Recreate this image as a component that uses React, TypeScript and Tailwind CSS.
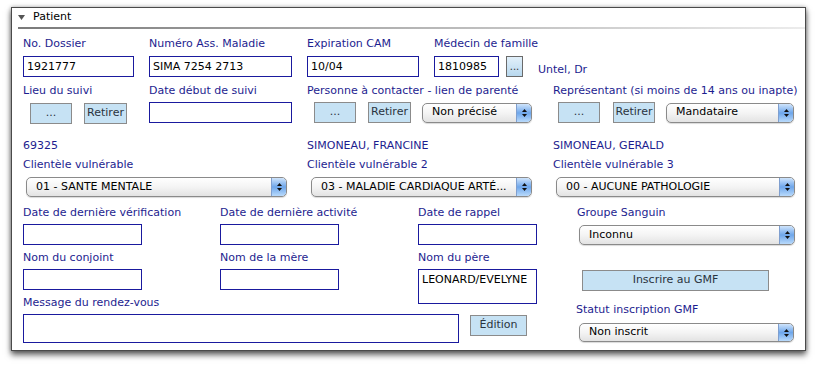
import React from 'react'

const label = 'h-[14px] leading-[14px] text-[11px] text-[#1d1d8f] whitespace-nowrap'

function Label({children, className = ''}: {children: React.ReactNode, className?: string}) {
    return <div className={`${label} ${className}`}>{children}</div>
}

function Field({className = '', value = ''}: {className?: string, value?: string}) {
    return (
        <input type="text" readOnly value={value}
               className={`block border border-[#1a1a9e] bg-white px-[3px] text-[11px] text-black outline-none ${className}`}/>
    )
}

function Btn({children, className = ''}: {children: React.ReactNode, className?: string}) {
    return (
        <div className={`flex items-center justify-center border border-[#8b8b8b] bg-[#c6e2f4] text-[11px] text-[#2a3440] ${className}`}>
            {children}
        </div>
    )
}

function Stepper() {
    return (
        <div className="flex h-full w-[15px] flex-col items-center justify-center gap-[2px] rounded-r-[4px] border-l border-[#7f9fcf] bg-gradient-to-b from-[#cfe4fb] via-[#6ea6ea] to-[#b9dafb]">
            <svg width="5" height="3" viewBox="0 0 5 3"><path d="M2.5 0 L5 3 L0 3 Z" fill="#111"/></svg>
            <svg width="5" height="3" viewBox="0 0 5 3"><path d="M0 0 L5 0 L2.5 3 Z" fill="#111"/></svg>
        </div>
    )
}

function Select({text, className = ''}: {text: string, className?: string}) {
    return (
        <div className={`flex items-center overflow-hidden rounded-[5px] border border-[#8a8a8a] bg-gradient-to-b from-white via-[#f4f4f4] to-[#e3e3e3] text-[11px] text-black shadow-[0_1px_1px_rgba(0,0,0,0.15)] ${className}`}>
            <div className="flex-1 whitespace-nowrap pl-[9px]">{text}</div>
            <Stepper/>
        </div>
    )
}

export default function App() {
    return (
        <div className="min-h-[366px] bg-white pt-[7px] pl-[11px] font-['DejaVu_Sans',sans-serif]">
            <div className="h-[344px] w-[795px] border border-[#4a4a4a] bg-white shadow-[0_4px_6px_rgba(0,0,0,0.6),0_0_4px_rgba(0,0,0,0.3)]">
                {/* header */}
                <div className="flex h-[19px] items-center pl-[6px] text-[11px] text-black">
                    <svg width="7" height="5" viewBox="0 0 7 5" className="mr-[8px]">
                        <path d="M0 0 L7 0 L3.5 5 Z" fill="#555"/>
                    </svg>
                    Patient
                </div>
                <div className="ml-[6px] h-[2px] bg-gradient-to-r from-[#7a7a7a] via-[#b5b5b5] to-[#ececec]"/>

                <div className="pl-[11px] pt-[8px]">
                    {/* row 1 */}
                    <div className="flex">
                        <div className="w-[126px]">
                            <Label>No. Dossier</Label>
                            <Field className="mt-[5px] h-[21px] w-[111px]" value="1921777"/>
                        </div>
                        <div className="w-[158px]">
                            <Label>Numéro Ass. Maladie</Label>
                            <Field className="mt-[5px] h-[21px] w-[143px]" value="SIMA 7254 2713"/>
                        </div>
                        <div className="w-[127px]">
                            <Label>Expiration CAM</Label>
                            <Field className="mt-[5px] h-[21px] w-[112px]" value="10/04"/>
                        </div>
                        <div>
                            <Label>Médecin de famille</Label>
                            <div className="mt-[5px] flex h-[21px]">
                                <Field className="h-[21px] w-[65px]" value="1810985"/>
                                <div className="ml-[7px] flex h-[21px] w-[17px] items-center justify-center border border-[#6a6a6a] bg-gradient-to-b from-[#e2f0fa] to-[#b8d8ee] text-[10px] leading-none text-[#333]">...</div>
                                <div className="ml-[15px] self-end text-[11px] leading-[14px] text-[#1d1d8f]">Untel, Dr</div>
                            </div>
                        </div>
                    </div>

                    {/* row 2 */}
                    <div className="mt-[7px] flex">
                        <div className="w-[126px]">
                            <Label>Lieu du suivi</Label>
                            <div className="mt-[5px] flex pl-[7px]">
                                <Btn className="h-[21px] w-[42px]">...</Btn>
                                <Btn className="ml-[12px] h-[21px] w-[43px]">Retirer</Btn>
                            </div>
                        </div>
                        <div className="w-[158px]">
                            <Label>Date début de suivi</Label>
                            <Field className="mt-[4px] h-[21px] w-[143px]"/>
                        </div>
                        <div className="w-[246px]">
                            <Label>Personne à contacter - lien de parenté</Label>
                            <div className="mt-[4px] flex items-center pl-[7px]">
                                <Btn className="h-[21px] w-[42px]">...</Btn>
                                <Btn className="ml-[12px] h-[21px] w-[43px]">Retirer</Btn>
                                <Select className="ml-[11px] h-[20px] w-[110px]" text="Non précisé"/>
                            </div>
                        </div>
                        <div>
                            <Label>Représentant (si moins de 14 ans ou inapte)</Label>
                            <div className="mt-[4px] flex items-center pl-[5px]">
                                <Btn className="h-[21px] w-[42px]">...</Btn>
                                <Btn className="ml-[13px] h-[21px] w-[42px]">Retirer</Btn>
                                <Select className="ml-[11px] h-[20px] w-[128px]" text="Mandataire"/>
                            </div>
                        </div>
                    </div>

                    {/* row 3 */}
                    <div className="mt-[15px] flex">
                        <div className="w-[284px]">
                            <Label>69325</Label>
                            <Label className="mt-[5px]">Clientèle vulnérable</Label>
                            <Select className="mt-[5px] ml-[3px] h-[20px] w-[261px]" text="01 - SANTE MENTALE"/>
                        </div>
                        <div className="w-[246px]">
                            <Label>SIMONEAU, FRANCINE</Label>
                            <Label className="mt-[5px]">Clientèle vulnérable 2</Label>
                            <Select className="mt-[5px] ml-[4px] h-[20px] w-[221px]" text="03 - MALADIE CARDIAQUE ARTÉ..."/>
                        </div>
                        <div>
                            <Label>SIMONEAU, GERALD</Label>
                            <Label className="mt-[5px]">Clientèle vulnérable 3</Label>
                            <Select className="mt-[5px] ml-[3px] h-[20px] w-[239px]" text="00 - AUCUNE PATHOLOGIE"/>
                        </div>
                    </div>

                    {/* rows 4-6 */}
                    <div className="mt-[9px] flex">
                        <div className="w-[554px]">
                            <div className="flex">
                                <div className="w-[197px]">
                                    <Label>Date de dernière vérification</Label>
                                    <Field className="mt-[4px] h-[21px] w-[119px]"/>
                                </div>
                                <div className="w-[198px]">
                                    <Label>Date de dernière activité</Label>
                                    <Field className="mt-[4px] h-[21px] w-[119px]"/>
                                </div>
                                <div>
                                    <Label>Date de rappel</Label>
                                    <Field className="mt-[4px] h-[21px] w-[119px]"/>
                                </div>
                            </div>
                            <div className="mt-[6px] flex">
                                <div className="w-[197px]">
                                    <Label>Nom du conjoint</Label>
                                    <Field className="mt-[4px] h-[21px] w-[119px]"/>
                                </div>
                                <div className="w-[198px]">
                                    <Label>Nom de la mère</Label>
                                    <Field className="mt-[4px] h-[21px] w-[119px]"/>
                                </div>
                                <div>
                                    <Label>Nom du père</Label>
                                    <textarea readOnly value="LEONARD/EVELYNE"
                                              className="mt-[4px] block h-[35px] w-[119px] resize-none overflow-hidden border border-[#1a1a9e] bg-white px-[3px] pt-[3px] text-[11px] leading-[14px] text-black outline-none"/>
                                </div>
                            </div>
                            <Label className="-mt-[8px]">Message du rendez-vous</Label>
                            <div className="mt-[4px] flex items-start">
                                <Field className="h-[29px] w-[436px]"/>
                                <Btn className="ml-[11px] mt-[1px] h-[21px] w-[57px]">Édition</Btn>
                            </div>
                        </div>
                        <div>
                            <Label>Groupe Sanguin</Label>
                            <Select className="mt-[5px] ml-[2px] h-[20px] w-[216px]" text="Inconnu"/>
                            <Btn className="mt-[25px] ml-[5px] h-[21px] w-[187px]">Inscrire au GMF</Btn>
                            <Label className="mt-[12px] -ml-[1px]">Statut inscription GMF</Label>
                            <Select className="mt-[6px] ml-[2px] h-[19px] w-[215px]" text="Non inscrit"/>
                        </div>
                    </div>
                </div>
            </div>
        </div>
    )
}
